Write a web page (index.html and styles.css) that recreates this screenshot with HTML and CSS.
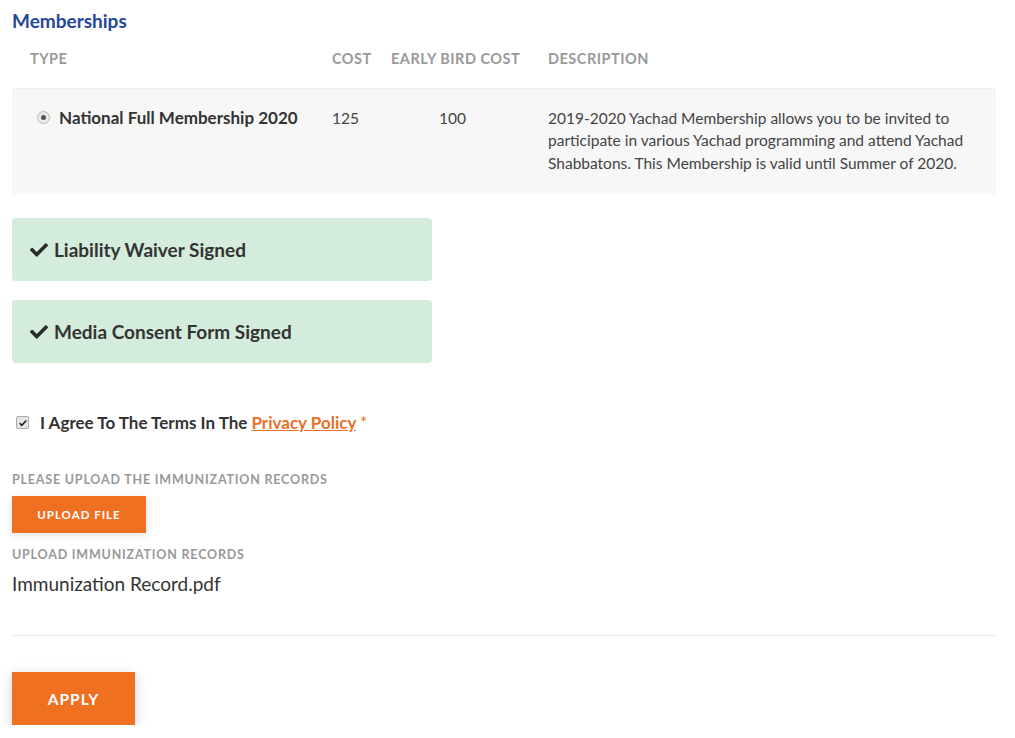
FILE: index.html
```html
<!DOCTYPE html>
<html>
<head>
<meta charset="utf-8">
<link rel="stylesheet" href="styles.css">
</head>
<body>
<div class="page">
  <h2 class="title">Memberships</h2>
  <div class="table">
    <div class="row head">
      <div class="cell c1">Type</div>
      <div class="cell c2">Cost</div>
      <div class="cell c3">Early Bird Cost</div>
      <div class="cell c4">Description</div>
    </div>
    <div class="row body">
      <div class="cell c1 name"><span class="radio"><span class="dot"></span></span>National Full Membership 2020</div>
      <div class="cell c2">125</div>
      <div class="cell c3 eb">100</div>
      <div class="cell c4 desc">2019-2020 Yachad Membership allows you to be invited to participate in various Yachad programming and attend Yachad Shabbatons. This Membership is valid until Summer of 2020.</div>
    </div>
  </div>

  <div class="signed"><svg class="check" viewBox="0 0 512 512" width="18" height="18"><path d="M173.9 439.4l-166.4-166.4c-10-10-10-26.2 0-36.2l36.2-36.2c10-10 26.2-10 36.2 0L192 312.7 432.1 72.6c10-10 26.2-10 36.2 0l36.2 36.2c10 10 10 26.2 0 36.2L210.1 439.4c-10 10-26.2 10-36.2 0z" fill="#2b2b2b"/></svg>Liability Waiver Signed</div>
  <div class="signed"><svg class="check" viewBox="0 0 512 512" width="18" height="18"><path d="M173.9 439.4l-166.4-166.4c-10-10-10-26.2 0-36.2l36.2-36.2c10-10 26.2-10 36.2 0L192 312.7 432.1 72.6c10-10 26.2-10 36.2 0l36.2 36.2c10 10 10 26.2 0 36.2L210.1 439.4c-10 10-26.2 10-36.2 0z" fill="#2b2b2b"/></svg>Media Consent Form Signed</div>

  <div class="agree">
    <span class="cbox"><svg viewBox="0 0 12 12" width="10" height="10"><path d="M2 6.2 L4.6 8.8 L10 3" fill="none" stroke="#222" stroke-width="2"/></svg></span>
    <span>I Agree To The Terms In The <a class="link" href="#">Privacy Policy</a> <span class="req">*</span></span>
  </div>

  <div class="label">Please Upload The Immunization Records</div>
  <button class="upload">Upload File</button>
  <div class="label second">Upload Immunization Records</div>
  <div class="file">Immunization Record.pdf</div>

  <hr class="divider">

  <button class="apply">Apply</button>
</div>
</body>
</html>
```

FILE: styles.css
```css
* { box-sizing: border-box; }
body {
  margin: 0;
  background: #fff;
  font-family: "Lato", "Open Sans", sans-serif;
  color: #333;
}
.page {
  padding: 8px 19px 0 12px;
}
.title {
  margin: 0;
  font-size: 19px;
  font-weight: 700;
  color: #25479a;
  line-height: 26px;
}
.table {
  margin-top: 10px;
}
.row {
  display: grid;
  grid-template-columns: 302px 59px 157px 1fr;
}
.cell {
  padding-left: 18px;
}
.head {
  height: 45px;
  border-bottom: 1px solid #eee;
}
.head .cell {
  font-size: 14.5px;
  font-weight: 700;
  text-transform: uppercase;
  color: #999;
  padding-top: 6px;
  letter-spacing: 0.5px;
}
.body {
  background: #f7f7f7;
  padding: 18px 0 20px;
  font-size: 15.5px;
  line-height: 22.4px;
  color: #444;
}
.name {
  font-weight: 700;
  font-size: 17px;
  color: #333;
  display: flex;
  align-items: flex-start;
  padding-left: 25px;
  gap: 9px;
}
.radio {
  margin-top: 4px;
  width: 13px;
  height: 13px;
  border-radius: 50%;
  border: 1px solid #b9b9b9;
  background: #eaeaea;
  display: flex;
  align-items: center;
  justify-content: center;
  flex: none;
}
.dot {
  width: 5px;
  height: 5px;
  border-radius: 50%;
  background: #555;
}
.eb { padding-left: 66px; }
.desc { padding-right: 14px; }
.signed {
  width: 420px;
  height: 63px;
  margin-top: 24px;
  background: #d4ecdb;
  border-radius: 4px;
  display: flex;
  align-items: center;
  padding-left: 18px;
  font-size: 19px;
  font-weight: 700;
  color: #333;
  gap: 6px;
}
.signed + .signed { margin-top: 19px; }
.check { flex: none; }
.agree {
  margin-top: 49px;
  display: flex;
  align-items: center;
  gap: 11px;
  padding-left: 4px;
  font-size: 17px;
  font-weight: 700;
  color: #333;
}
.cbox {
  width: 13px;
  height: 13px;
  border: 1px solid #aaa;
  border-radius: 2px;
  background: #e6e6e6;
  display: flex;
  align-items: center;
  justify-content: center;
}
.link {
  color: #e8702a;
  text-decoration: underline;
}
.req { color: #e8702a; font-weight: 400; }
.label {
  margin-top: 39px;
  font-size: 12.5px;
  font-weight: 700;
  text-transform: uppercase;
  color: #999;
  letter-spacing: 0.8px;
  line-height: 16px;
}
.label.second { margin-top: 14px; }
.upload {
  margin-top: 8px;
  display: block;
  width: 134px;
  height: 37px;
  border: 0;
  background: #f07022;
  color: #fff;
  font-family: inherit;
  font-size: 11.5px;
  font-weight: 700;
  letter-spacing: 1px;
  text-transform: uppercase;
  box-shadow: 0 2px 8px rgba(0,0,0,0.12);
}
.file {
  margin-top: 9px;
  font-size: 19px;
  color: #333;
}
.divider {
  margin: 40px 0 0;
  border: 0;
  border-top: 1px solid #eaeaea;
}
.apply {
  margin-top: 36px;
  display: block;
  width: 123px;
  height: 53px;
  border: 0;
  background: #f07022;
  color: #fff;
  font-family: inherit;
  font-size: 15.5px;
  font-weight: 700;
  letter-spacing: 1px;
  text-transform: uppercase;
  box-shadow: 0 3px 12px rgba(0,0,0,0.18);
}
```
